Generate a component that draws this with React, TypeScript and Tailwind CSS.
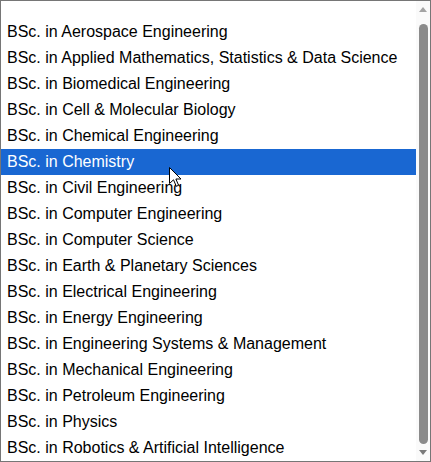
import React from 'react';

const programs = [
  'BSc. in Aerospace Engineering',
  'BSc. in Applied Mathematics, Statistics & Data Science',
  'BSc. in Biomedical Engineering',
  'BSc. in Cell & Molecular Biology',
  'BSc. in Chemical Engineering',
  'BSc. in Chemistry',
  'BSc. in Civil Engineering',
  'BSc. in Computer Engineering',
  'BSc. in Computer Science',
  'BSc. in Earth & Planetary Sciences',
  'BSc. in Electrical Engineering',
  'BSc. in Energy Engineering',
  'BSc. in Engineering Systems & Management',
  'BSc. in Mechanical Engineering',
  'BSc. in Petroleum Engineering',
  'BSc. in Physics',
  'BSc. in Robotics & Artificial Intelligence',
];

const selected = 'BSc. in Chemistry';

const App: React.FC = () => {
  return (
    <div className="relative flex h-[462px] w-[431px] overflow-hidden border border-[#767676] bg-white font-['Liberation_Sans',Arial,sans-serif] text-[16px] text-black">
      {/* Options */}
      <div className="flex min-w-0 flex-1 flex-col pt-[18px]">
        {programs.map((p) => (
          <div
            key={p}
            className={`flex h-[26px] shrink-0 items-center whitespace-nowrap pl-[6px] ${
              p === selected ? 'bg-[#1967d2] text-white' : ''
            }`}
          >
            {p}
          </div>
        ))}
      </div>

      {/* Scrollbar */}
      <div className="flex w-[14px] shrink-0 flex-col items-center bg-[#fafafa]">
        <div className="flex h-[17px] w-full shrink-0 items-center justify-center">
          <div className="h-0 w-0 border-x-[4px] border-b-[5px] border-x-transparent border-b-[#a3a3a3]" />
        </div>
        <div className="mt-[6px] h-[420px] w-[9px] rounded-full bg-[#8b8b8b]" />
        <div className="flex flex-1 w-full items-center justify-center">
          <div className="h-0 w-0 border-x-[4px] border-t-[5px] border-x-transparent border-t-[#7a7a7a]" />
        </div>
      </div>

      {/* Mouse pointer */}
      <svg
        className="pointer-events-none absolute left-[168px] top-[166px]"
        width="13"
        height="21"
        viewBox="0 0 13 21"
      >
        <path
          d="M0.5 0.5 L0.5 16.5 L4.5 12.8 L7.3 19.3 L9.6 18.3 L6.9 12 L12 12 Z"
          fill="white"
          stroke="black"
          strokeWidth="1"
          strokeLinejoin="miter"
        />
      </svg>
    </div>
  );
};

export default App;
